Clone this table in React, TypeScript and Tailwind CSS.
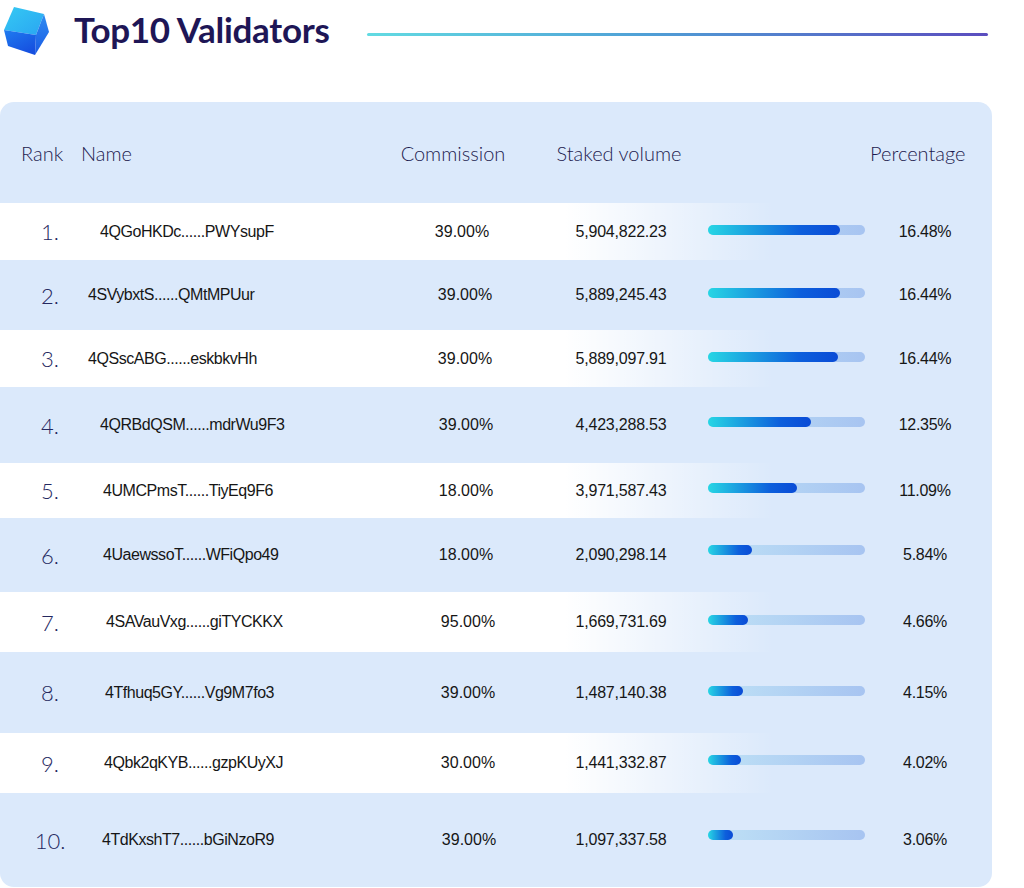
import React from "react";

type Row = {
  rank: string;
  name: string;
  commission: string;
  staked: string;
  pct: string;
  fill: number;
  h: string;
  white: boolean;
  nameShift: string;
  comShift: string;
  barShift: string;
};

const rows: Row[] = [
  { rank: "1.", name: "4QGoHKDc......PWYsupF", commission: "39.00%", staked: "5,904,822.23", pct: "16.48%", fill: 132, h: "h-[57px]", white: true, nameShift: "ml-0", comShift: "-translate-x-[3px]", barShift: "-translate-y-[2px]" },
  { rank: "2.", name: "4SVybxtS......QMtMPUur", commission: "39.00%", staked: "5,889,245.43", pct: "16.44%", fill: 132, h: "h-[70px]", white: false, nameShift: "-ml-[12px]", comShift: "translate-x-0", barShift: "-translate-y-[2px]" },
  { rank: "3.", name: "4QSscABG......eskbkvHh", commission: "39.00%", staked: "5,889,097.91", pct: "16.44%", fill: 130, h: "h-[57px]", white: true, nameShift: "-ml-[12px]", comShift: "translate-x-0", barShift: "-translate-y-[2px]" },
  { rank: "4.", name: "4QRBdQSM......mdrWu9F3", commission: "39.00%", staked: "4,423,288.53", pct: "12.35%", fill: 103, h: "h-[76px]", white: false, nameShift: "ml-0", comShift: "translate-x-[1px]", barShift: "-translate-y-[3px]" },
  { rank: "5.", name: "4UMCPmsT......TiyEq9F6", commission: "18.00%", staked: "3,971,587.43", pct: "11.09%", fill: 89, h: "h-[55px]", white: true, nameShift: "ml-[3px]", comShift: "translate-x-[1px]", barShift: "-translate-y-[3px]" },
  { rank: "6.", name: "4UaewssoT......WFiQpo49", commission: "18.00%", staked: "2,090,298.14", pct: "5.84%", fill: 44, h: "h-[74px]", white: false, nameShift: "ml-[3px]", comShift: "translate-x-[1px]", barShift: "-translate-y-[5px]" },
  { rank: "7.", name: "4SAVauVxg......giTYCKKX", commission: "95.00%", staked: "1,669,731.69", pct: "4.66%", fill: 40, h: "h-[60px]", white: true, nameShift: "ml-[6px]", comShift: "translate-x-[3px]", barShift: "-translate-y-[2px]" },
  { rank: "8.", name: "4Tfhuq5GY......Vg9M7fo3", commission: "39.00%", staked: "1,487,140.38", pct: "4.15%", fill: 35, h: "h-[81px]", white: false, nameShift: "ml-[5px]", comShift: "translate-x-[3px]", barShift: "-translate-y-[2px]" },
  { rank: "9.", name: "4Qbk2qKYB......gzpKUyXJ", commission: "30.00%", staked: "1,441,332.87", pct: "4.02%", fill: 33, h: "h-[60px]", white: true, nameShift: "ml-[4px]", comShift: "translate-x-[3px]", barShift: "-translate-y-[3px]" },
  { rank: "10.", name: "4TdKxshT7......bGiNzoR9", commission: "39.00%", staked: "1,097,337.58", pct: "3.06%", fill: 25, h: "h-[94px]", white: false, nameShift: "ml-[2px]", comShift: "translate-x-[4px]", barShift: "-translate-y-[5px]" },
];

function Cube() {
  return (
    <svg width="50" height="54" viewBox="0 0 50 54" className="block">
      <defs>
        <linearGradient id="topf" x1="0" y1="0" x2="1" y2="1">
          <stop offset="0" stopColor="#35c9f3" />
          <stop offset="1" stopColor="#2aa6f2" />
        </linearGradient>
        <linearGradient id="leftf" x1="0" y1="0" x2="0.6" y2="1">
          <stop offset="0" stopColor="#1f7cf0" />
          <stop offset="1" stopColor="#1650e0" />
        </linearGradient>
        <linearGradient id="rightf" x1="0" y1="0" x2="0" y2="1">
          <stop offset="0" stopColor="#2e8cf2" />
          <stop offset="1" stopColor="#1a5ae4" />
        </linearGradient>
      </defs>
      <polygon points="3,28 13,5 43,12 35,33" fill="url(#topf)" />
      <polygon points="43,12 48,30 34,53 35,33" fill="url(#rightf)" />
      <polygon points="3,28 35,33 34,53 7,44" fill="url(#leftf)" />
    </svg>
  );
}

export default function App() {
  const head = "font-['Lato',_'DejaVu_Sans',_sans-serif] text-[20px] text-[#1d1b4f] font-light";
  const cell = "font-['Liberation_Sans',_Arial,_sans-serif] text-[16px] text-[#161616]";
  return (
    <div className="w-[1024px] h-[888px] bg-white overflow-hidden">
      <div className="h-[102px] flex items-start">
        <div className="ml-[1px] mt-[2px]">
          <Cube />
        </div>
        <div className="ml-[23px] mt-[7px] font-['Lato',_sans-serif] font-bold text-[35px] leading-[44px] text-[#1e1656] tracking-[-0.3px] whitespace-nowrap">
          Top10 Validators
        </div>
        <div className="flex-1 ml-[37px] mr-[36px] mt-[33px] h-[3px] rounded-full bg-[linear-gradient(90deg,#62dbe2,#4f9fd6_45%,#5b4dbf)]" />
      </div>

      <div className="w-[992px] h-[785px] rounded-[14px] bg-[#dbe9fb] overflow-hidden flex flex-col">
        <div className={`h-[101px] flex items-center ${head}`}>
          <div className="w-[81px] pl-[21px]">Rank</div>
          <div className="w-[299px]">Name</div>
          <div className="w-[146px] text-center">Commission</div>
          <div className="w-[186px] text-center">Staked volume</div>
          <div className="w-[158px]" />
          <div>Percentage</div>
        </div>
        {rows.map((r) => (
          <div
            key={r.rank}
            className={`${r.h} flex items-center ${r.white ? "bg-[linear-gradient(90deg,#ffffff_0%,#ffffff_57%,rgba(255,255,255,0)_78%)]" : ""}`}
          >
            <div className="w-[100px] shrink-0 text-center font-['Lato',_sans-serif] text-[22px] font-light text-[#25285f]">
              {r.rank}
            </div>
            <div className="w-[280px] shrink-0">
              <div className={`${r.nameShift} ${cell} tracking-[-0.45px] whitespace-nowrap`}>{r.name}</div>
            </div>
            <div className={`w-[170px] shrink-0 text-center ${cell} ${r.comShift}`}>{r.commission}</div>
            <div className={`w-[142px] shrink-0 text-center ${cell} tracking-[-0.2px]`}>{r.staked}</div>
            <div className="w-[188px] shrink-0 pl-[16px]">
              <div className={`w-[157px] h-[10px] rounded-full bg-[linear-gradient(90deg,#bfe2f6,#a7c4f1)] ${r.barShift}`}>
                <div
                  className="h-[10px] rounded-full bg-[linear-gradient(90deg,#27d6e4,#0d5fdc_70%,#0a4bd6)]"
                  style={{ width: `${r.fill}px` }}
                />
              </div>
            </div>
            <div className={`w-[90px] shrink-0 text-center ${cell} tracking-[-0.3px]`}>{r.pct}</div>
          </div>
        ))}
      </div>
    </div>
  );
}
